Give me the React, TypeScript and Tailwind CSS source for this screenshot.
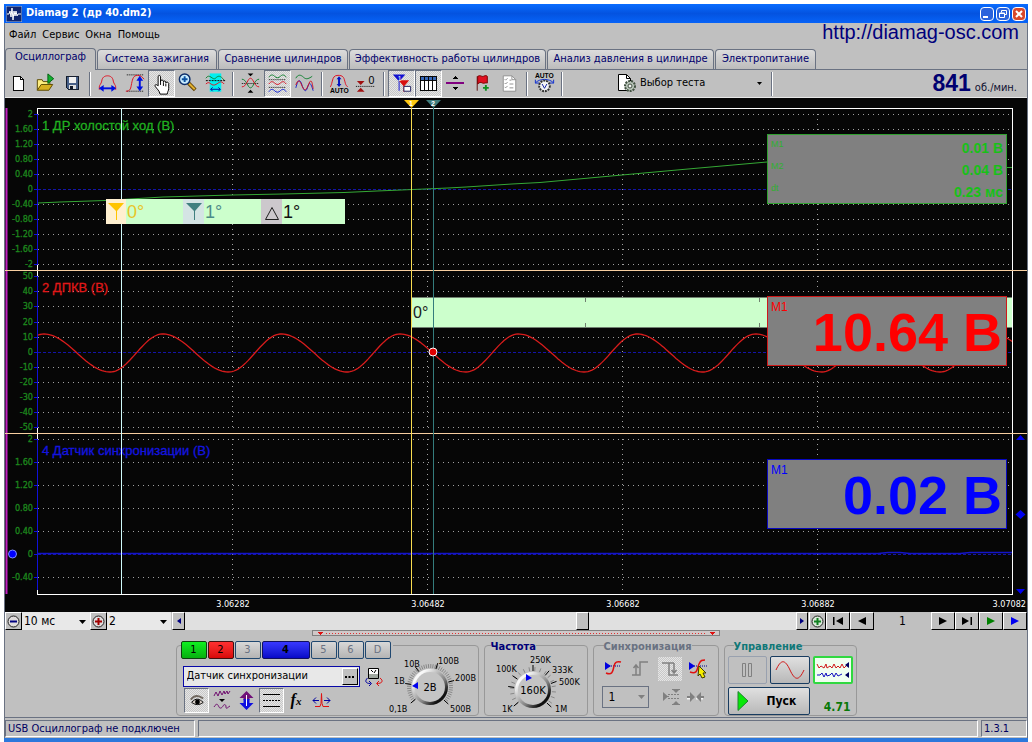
import type { ReactNode } from 'react'
import clsx from 'clsx'

const UI = "font-['DejaVu_Sans_Condensed','DejaVu_Sans',sans-serif]"
const ARIAL = "font-['Liberation_Sans',sans-serif]"

const PRESSED =
  'border-t-gray-500 border-l-gray-500 border-b-white border-r-white bg-[repeating-conic-gradient(#e6e6e6_0_25%,#c8c8c8_0_50%)] bg-[length:2px_2px]'
const RAISED = 'border border-t-white border-l-white border-b-black border-r-black bg-[#c0c0c0]'

/* ---------- small shared pieces ---------- */

function Icon({ children, crisp = false }: { children: ReactNode; crisp?: boolean }) {
  return (
    <svg viewBox="0 0 26 26" className="size-[26px]" fill="none" shapeRendering={crisp ? 'crispEdges' : 'auto'}>
      {children}
    </svg>
  )
}

function ToolButton({ label, pressed = false, children }: { label: string; pressed?: boolean; children: ReactNode }) {
  return (
    <button
      aria-label={label}
      aria-pressed={pressed}
      className={clsx('flex size-[27px] shrink-0 items-center justify-center border', pressed ? PRESSED : 'border-transparent')}
    >
      {children}
    </button>
  )
}

function Separator() {
  return <span className="mx-[3px] h-6 w-0.5 shrink-0 border-l border-l-gray-500 bg-white" />
}

/* ---------- title, menu, tabs ---------- */

function TitleBar() {
  return (
    <header className="flex h-[19px] items-center bg-linear-to-b from-[#0a6cff] via-[#0453e0] to-[#0763f8] pr-0.5 pl-0.5">
      <svg viewBox="0 0 16 16" className="size-4" fill="none">
        <rect width="16" height="16" fill="#10246c" stroke="#9cc0f0" />
        <path d="M1 8h2l1-3 1 6 1-9 1 12 1-9 1 5 1-5 1 5 1-2h3" stroke="#fff" />
      </svg>
      <h1 className={clsx(UI, 'ml-1 text-[11px] font-bold text-white')}>Diamag 2 (др 40.dm2)</h1>
      <div className="ml-auto flex gap-0.5">
        <button aria-label="Свернуть" className="size-[14px] rounded-sm border border-white bg-[#2a62dc]">
          <svg viewBox="0 0 12 12" className="size-3" stroke="#fff" strokeWidth="2">
            <path d="M2 9h5" />
          </svg>
        </button>
        <button aria-label="Восстановить" className="size-[14px] rounded-sm border border-white bg-[#2a62dc]">
          <svg viewBox="0 0 12 12" className="size-3" stroke="#fff" fill="none">
            <path d="M4.500 4.500v-2h5v4h-2M2.500 5h5v4.500h-5zM2.500 5.500h5" />
          </svg>
        </button>
        <button aria-label="Закрыть" className="size-[14px] rounded-sm border border-white bg-[#d8472a]">
          <svg viewBox="0 0 12 12" className="size-3" stroke="#fff" strokeWidth="2">
            <path d="M3 3l6 6M9 3l-6 6" />
          </svg>
        </button>
      </div>
    </header>
  )
}

function MenuBar() {
  return (
    <nav className="flex h-[25px] items-center justify-between pr-2 pl-1">
      <div className={clsx(UI, 'flex gap-1.5 text-[11px] text-black')}>
        <button>Файл</button>
        <button>Сервис</button>
        <button>Окна</button>
        <button>Помощь</button>
      </div>
      <a href="http://diamag-osc.com" className={clsx(ARIAL, 'pb-2 text-xl leading-4 text-[#00007c]')}>
        http://diamag-osc.com
      </a>
    </nav>
  )
}

const TABS = [
  { title: 'Осциллограф', width: 'w-[91px]' },
  { title: 'Система зажигания', width: 'w-[120px]' },
  { title: 'Сравнение цилиндров', width: 'w-[130px]' },
  { title: 'Эффективность работы цилиндров', width: 'w-[197px]' },
  { title: 'Анализ давления в цилиндре', width: 'w-[167px]' },
  { title: 'Электропитание', width: 'w-[101px]' },
]

function Tabs() {
  return (
    <div role="tablist" className={clsx(UI, 'flex h-[22px] items-end gap-px border-b border-gray-500 text-[11px] text-[#00006c]')}>
      {TABS.map((tab, i) => (
        <button
          key={tab.title}
          role="tab"
          aria-selected={i === 0}
          className={clsx(
            'shrink-0 rounded-t-sm border border-b-0 border-gray-500 whitespace-nowrap',
            tab.width,
            i === 0 ? '-mb-px h-[22px] bg-[#c0c0c0] pb-1' : 'h-5 bg-linear-to-b from-[#dcdcdc] to-[#bcbcbc]',
          )}
        >
          {tab.title}
        </button>
      ))}
    </div>
  )
}

/* ---------- toolbar ---------- */

function Toolbar() {
  return (
    <div className="flex h-[27px] items-center">
      <ToolButton label="Новый">
        <Icon crisp>
          <path d="M7.500 5.500h8l3 3v11h-11z" fill="#fff" stroke="#000" />
          <path d="M15.500 5.500v3h3" stroke="#000" />
        </Icon>
      </ToolButton>
      <ToolButton label="Открыть">
        <Icon>
          <path d="M4.500 19.500v-11h5l1 2h7v3" fill="#ffee80" stroke="#5c4a00" />
          <path d="M4.500 19.500l4-6h12l-4 6z" fill="#d8b020" stroke="#5c4a00" />
          <path d="M15.500 2.500l6 5-6 5z" fill="#10b030" stroke="#006010" />
        </Icon>
      </ToolButton>
      <ToolButton label="Сохранить">
        <Icon crisp>
          <path d="M6.500 5.500h13v13h-11l-2-2z" fill="#486088" stroke="#101828" />
          <path d="M9 6h8v6h-8z" fill="#f0f0f0" />
          <path d="M9 14h8v4h-8z" fill="#e0e0e0" />
          <path d="M10 15h3v3h-3z" fill="#101828" />
        </Icon>
      </ToolButton>
      <Separator />
      <ToolButton label="Период">
        <Icon>
          <path d="M4.500 19v-3c0-2 2-3 2.500-6 .5-4 3-5.500 6-5.500s5.500 1.500 6 5.500c.5 3 2.500 4 2.500 6v3" stroke="#e01020" />
          <path d="M6 17.500h14" stroke="#0010e0" strokeWidth="2" />
          <path d="M9 14v7l-5-3.500zM17 14v7l5-3.500z" fill="#0010e0" />
        </Icon>
      </ToolButton>
      <ToolButton label="Размах">
        <Icon>
          <path d="M5 3.500h18M5 20.500h18" stroke="#000" strokeDasharray="1 1" />
          <path d="M4 20.500c5 0 5-3 6-8s2-8.500 6-8.500 5 2 7 4" stroke="#e01020" />
          <path d="M18.500 8v9" stroke="#0010e0" strokeWidth="2" />
          <path d="M15 9.500h7l-3.500-5zM15 15.500h7l-3.500 5z" fill="#0010e0" />
        </Icon>
      </ToolButton>
      <ToolButton label="Рука" pressed>
        <Icon>
          <path
            d="M9.500 15V5.500c0-2 2.500-2 2.500 0V11v-1c0-1.500 3-1.500 3 0v1.500-.5c0-1.500 2.500-1.500 2.500 0v1c0-1.500 3-1 3 .5V18c0 2-1.500 3-1.500 5.500h-7.500C11 20 8 18 6.500 15.500c-1-1.500 1-3 3-.5z"
            fill="#fff"
            stroke="#000"
          />
          <path d="M12 11v3M15 12v3M17.500 12.500v3" stroke="#000" />
        </Icon>
      </ToolButton>
      <ToolButton label="Масштаб">
        <Icon>
          <path d="M13 12l7 7" stroke="#604000" strokeWidth="4" />
          <path d="M13.500 12.500l6 6" stroke="#e0b030" strokeWidth="2" />
          <circle cx="9" cy="8" r="5.500" fill="#c8ecff" stroke="#0c2c68" strokeWidth="1.500" />
          <path d="M9 5v6M6 8h6" stroke="#0c50a0" strokeWidth="2" />
        </Icon>
      </ToolButton>
      <ToolButton label="Участок">
        <Icon>
          <path d="M7 2h12v19h-12z" fill="#00f0f0" />
          <path d="M3 7c4-6 7 3 10 0s5-3 9 2" stroke="#108030" />
          <path d="M3 9.500h20" stroke="#000" strokeDasharray="2 1" />
          <path d="M3 13c4-4 5 2 9 1s6-6 10-1" stroke="#e01020" />
          <path d="M8 18.500h10M10 16.500l-2 2 2 2M16 16.500l2 2-2 2" stroke="#0010a0" />
        </Icon>
      </ToolButton>
      <Separator />
      <ToolButton label="Сместить к нулю">
        <Icon>
          <path d="M4 12.500h18" stroke="#000" strokeDasharray="1 1" />
          <path d="M4 8c5 0 6 9 9 9s4-9 9-9" stroke="#108030" />
          <path d="M4 16c5 0 6-9 9-9s4 9 9 9" stroke="#e01020" />
          <path d="M10 2h6l-3 3zM10 22h6l-3-3z" fill="#000" />
        </Icon>
      </ToolButton>
      <ToolButton label="Раздельно" pressed>
        <Icon>
          <path d="M4 6c2-3 4-3 6-1s4 2 6 0 4-2 6 1" stroke="#108030" />
          <path d="M4 8.500h18M4 16.500h18" stroke="#000" strokeDasharray="1 1" />
          <path d="M4 13c2-3 4-3 6-1s4 2 6 0 4-2 6 1" stroke="#d01020" />
          <path d="M4 21c2-3 4-3 6-1s4 2 6 0 4-2 6 1" stroke="#1020d0" />
        </Icon>
      </ToolButton>
      <ToolButton label="Вместе">
        <Icon>
          <path d="M4 7c2-4 5-4 8-1s6 1 9-1" stroke="#108030" />
          <path d="M4 17c2-8 4-10 6-4s4 10 6 4 3-7 6 3" stroke="#1020d0" />
          <path d="M4 14c2-6 4-5 6 0s4 8 7 0 4-3 5 4" stroke="#d01020" />
        </Icon>
      </ToolButton>
      <Separator />
      <ToolButton label="Авто масштаб">
        <Icon>
          <path d="M3.500 16c1-2 1-2 2-6s2-6 6-6c5 0 6 2 7 6s1 4 3 6" stroke="#e01020" />
          <path d="M12.500 7v7" stroke="#0010c0" strokeWidth="2" />
          <path d="M10 8h5l-2.500-3zM10 13h5l-2.500 3z" fill="#0010c0" />
          <text x="3" y="22" fontSize="7" fontWeight="bold" fill="#000" className={ARIAL}>
            AUTO
          </text>
        </Icon>
      </ToolButton>
      <ToolButton label="Нулевой уровень">
        <Icon>
          <path d="M2 15.500h19" stroke="#000" strokeDasharray="1 1" />
          <path d="M3 10h8l-4 4zM3 21h8l-4-4z" fill="#a01010" />
          <text x="15" y="13" fontSize="11" fill="#000" className={ARIAL}>
            0
          </text>
        </Icon>
      </ToolButton>
      <Separator />
      <ToolButton label="Маркеры" pressed>
        <Icon>
          <path d="M4 3h13l-6 7v10h-1v-10z" fill="#1010d0" />
          <path d="M10 9h11l-5 6v6h-1v-6z" fill="#d81010" />
          <text x="9" y="10" fontSize="7" fill="#fff" className={ARIAL}>
            1
          </text>
          <path d="M15.500 15.500h7v5h-7z" fill="#fff" stroke="#202060" />
        </Icon>
      </ToolButton>
      <ToolButton label="Таблица" pressed>
        <Icon crisp>
          <path d="M4.500 5.500h17v14h-17z" fill="#fff" stroke="#000" />
          <path d="M5 6h16v3h-16z" fill="#3868b8" />
          <path d="M4 9.500h17M8.500 6v13M13.500 6v13M17.500 6v13" stroke="#000" />
        </Icon>
      </ToolButton>
      <ToolButton label="Уровень">
        <Icon crisp>
          <path d="M3 12h19" stroke="#800080" strokeWidth="2" />
          <path d="M10 8h6l-3-3zM10 16h6l-3 3z" fill="#000" />
        </Icon>
      </ToolButton>
      <ToolButton label="Добавить метку">
        <Icon>
          <path d="M7.500 5v15" stroke="#601010" />
          <path d="M8 5c3-2 4 1 6 0s3-1 4 0v7c-2-1-3 1-5 0s-3-1-5 1z" fill="#e01020" stroke="#700" />
          <path d="M16.500 14v6M13.500 17h6" stroke="#109020" strokeWidth="2" />
        </Icon>
      </ToolButton>
      <ToolButton label="Отчёт">
        <Icon>
          <path d="M6.500 4.500h9l4 4v12h-13z" fill="#fff" stroke="#909090" />
          <path d="M15.500 4.500v4h4M8 8l1 1 2-2M8 12l1 1 2-2M8 16l1 1 2-2M13 9h2M13 13h4M13 17h4" stroke="#909090" />
        </Icon>
      </ToolButton>
      <Separator />
      <ToolButton label="Авто осциллограф">
        <Icon>
          <text x="3" y="7" fontSize="7" fontWeight="bold" fill="#000" className={ARIAL}>
            AUTO
          </text>
          <path d="M3.500 12c4-5 15-5 19 0M3.500 8.500v3.500h4M22.500 8.500v3.500h-4" stroke="#1030d0" />
          <circle cx="13" cy="15" r="5.500" fill="#f4f4f4" stroke="#303030" strokeWidth="2" strokeDasharray="2 1" />
          <path d="M10.500 13l2.500 4.500 2.500-4.500" stroke="#1020a0" />
        </Icon>
      </ToolButton>
      <Separator />
      <button className={clsx(UI, 'ml-12 flex h-[26px] items-center text-[11px] text-black')}>
        <Icon>
          <path d="M4.500 3.500h8l4 4v12h-12z" fill="#fff" stroke="#000" />
          <path d="M12.500 3.500v4h4" stroke="#000" />
          <circle cx="16" cy="15" r="5" fill="#b8c4b8" stroke="#405040" strokeWidth="2" strokeDasharray="2 1" />
          <circle cx="16" cy="15" r="2" fill="#f4f4f4" stroke="#405040" />
        </Icon>
        <span>Выбор теста</span>
        <svg viewBox="0 0 5 3" className="mr-1.5 ml-[52px] h-[3px] w-[5px]">
          <path d="M0 0h5l-2.500 3z" />
        </svg>
      </button>
      <Separator />
      <p className="mr-2.5 ml-auto flex items-baseline gap-1 text-[#000070]">
        <strong className={clsx(ARIAL, 'text-[23px] leading-6')}>841</strong>
        <span className={clsx(UI, 'text-[11px] text-[#101030]')}>об./мин.</span>
      </p>
    </div>
  )
}

/* ---------- oscilloscope screen ---------- */

const LANES = [
  {
    rows: [114, 129, 144, 159, 174, 189, 204, 219, 234, 249, 264],
    labels: ['2', '1.60', '1.20', '0.80', '0.40', '0', '-0.40', '-0.80', '-1.20', '-1.60', '-2'],
    zero: 189,
    end: 264,
  },
  {
    rows: [276, 291, 306, 322, 337, 352, 367, 382, 397, 412, 427],
    labels: ['50', '40', '30', '20', '10', '0', '-10', '-20', '-30', '-40', '-50'],
    zero: 352,
    end: 427,
  },
  {
    rows: [439, 462, 485, 508, 531, 554, 577],
    labels: ['2', '1.60', '1.20', '0.80', '0.40', '0', '-0.40'],
    zero: 554,
    end: 590,
  },
]

const TIMES = [
  { x: 232, text: '3.06282' },
  { x: 427, text: '3.06482' },
  { x: 622, text: '3.06682' },
  { x: 817, text: '3.06882' },
]

// The crank sensor falls slower than it rises, so each half period has its own length.
function crankWave() {
  const period = 118.6
  const fall = 66
  const pts: string[] = []
  for (let x = 38; x <= 1012; x += 2) {
    const p = (x - 44 + period) % period
    const phase = p < fall ? (Math.PI * p) / fall : Math.PI + (Math.PI * (p - fall)) / (period - fall)
    pts.push(`${x},${(353 - 19 * Math.cos(phase)).toFixed(1)}`)
  }
  return pts.join(' ')
}

function Screen() {
  return (
    <svg viewBox="5 98 1022 514" className="block h-auto w-full bg-[#060606]" fill="none">
      <path d="M6.500 108v486" stroke="#c020c0" strokeWidth="2" />
      <path d="M37.500 594.500v-486h975v486z" stroke="#fff" shapeRendering="crispEdges" />

      <g shapeRendering="crispEdges">
        {LANES.map((lane) => (
          <g key={lane.zero}>
            {lane.rows.map((y) =>
              y === lane.zero ? (
                <path key={y} d={`M38 ${y + 0.5}h974`} stroke="#1414a8" strokeDasharray="3 2" />
              ) : (
                <path key={y} d={`M38 ${y + 0.5}h974`} stroke="#a0a0a0" strokeDasharray="1 4" />
              ),
            )}
            <path d={`M37.500 ${lane.rows[0]}V${lane.end}`} stroke="#1010d8" />
            {lane.rows.map((y) => (
              <path key={y} d={`M34 ${y + 0.5}h4`} stroke="#1010d8" />
            ))}
            {TIMES.map((t) => (
              <path key={t.x} d={`M${t.x}.5 ${lane.rows[0]}V${lane.end + 4}`} stroke="#a0a0a0" strokeDasharray="1 4" />
            ))}
          </g>
        ))}
      </g>

      <g className={UI} fontSize="9" fill="#1d861d" stroke="#1d861d" strokeWidth="0.3" textAnchor="end">
        {LANES.map((lane) =>
          lane.rows.map((y, i) => (
            <text key={y} x="33" y={y + 3}>
              {lane.labels[i]}
            </text>
          )),
        )}
      </g>
      <g className={UI} fontSize="9" fill="#fff" textAnchor="middle">
        {TIMES.map((t) => (
          <text key={t.x} x={t.x + 1} y="607">
            {t.text}
          </text>
        ))}
        <text x="1026" y="607" textAnchor="end">
          3.07082
        </text>
      </g>

      <path
        d="M38 203L60 202 105 200.500 163 197 232 195 283 194 344 192.500 377 191 401 190 425 189 448 188 466 187 512 184 540 182.500 584 178.500 622 175 688 169 750 163.500 767 162M1007 167.500h5"
        stroke="#35a835"
      />
      <path d="M38 553.500h840l10-1h12l10 1h50l10-1h42" stroke="#1414c8" strokeWidth="1.500" />

      <path d="M5 270.500h1022M5 433.500h1022" stroke="#f8cfa0" shapeRendering="crispEdges" />

      <g className={ARIAL} fontSize="13">
        <text x="42" y="130" fill="#20b020" stroke="#20b020" strokeWidth="0.3">
          1 ДР холостой ход (В)
        </text>
        <text x="42" y="292" fill="#e01818" stroke="#e01818" strokeWidth="0.3">
          2 ДПКВ (В)
        </text>
        <text x="42" y="455" fill="#1414e0" stroke="#1414e0" strokeWidth="0.3">
          4 Датчик синхронизации (В)
        </text>
      </g>

      <path d="M121.500 108v486" stroke="#d0fafa" shapeRendering="crispEdges" />

      <rect x="411" y="297" width="601" height="31" fill="#ccffcc" />
      <path d="M411 297.500h601M411 327.500h601M585.500 297v5M585.500 323v4M759.500 297v5M759.500 323v4" stroke="#708070" />
      <text x="413" y="318" fontSize="16" fill="#202020" className={ARIAL}>
        0°
      </text>

      <polyline points={crankWave()} stroke="#d81c1c" strokeWidth="1.300" />

      <path d="M411.500 108v486" stroke="#f8dc50" shapeRendering="crispEdges" />
      <path d="M433.500 108v486" stroke="#347c7c" shapeRendering="crispEdges" />
      <path d="M404 100h15l-7.500 8z" fill="#ffc810" />
      <path d="M426 100h15l-7.500 8z" fill="#407c7c" />
      <g fontSize="7" fontWeight="bold" fill="#fff" className={ARIAL}>
        <text x="409" y="106">
          1
        </text>
        <text x="431" y="106">
          2
        </text>
      </g>
      <circle cx="433" cy="352" r="4" fill="#e00000" stroke="#fff" />
      <circle cx="12.500" cy="554" r="4" fill="#0000ff" stroke="#8090ff" />

      <rect x="106" y="199" width="239" height="25" fill="#ccffcc" />
      <path d="M106 199h20v25h-20z" fill="#fff0d0" />
      <path d="M183 199h21v25h-21z" fill="#d4e4e4" />
      <path d="M261 199h21v25h-21z" fill="#ccc8cc" />
      <path d="M108 203h16l-7 8v9h-1v-9z" fill="#ffc400" />
      <path d="M186 203h16l-7 8v9h-1v-9z" fill="#408080" />
      <path d="M265.500 219.500h13l-6.500-12z" stroke="#202020" />
      <g fontSize="18" className={ARIAL}>
        <text x="127" y="218" fill="#e8c428">
          0°
        </text>
        <text x="205" y="218" fill="#4c8c88">
          1°
        </text>
        <text x="283" y="218" fill="#101010">
          1°
        </text>
      </g>

      <path d="M1016 440h9l-4.500-5zM1020.500 510l5 4.500-5 4.500-5-4.500zM1016 589h9l-4.500 5z" fill="#0000f0" />
    </svg>
  )
}

function Readout({ marker, value, tone, place }: { marker: string; value: string; tone: string; place: string }) {
  return (
    <div className={clsx(ARIAL, 'absolute right-5 h-[70px] w-60 border bg-[#808080] px-1', tone, place)}>
      <span className="absolute top-0.5 left-[3px] text-xs">{marker}</span>
      <p className="text-right text-[54px] leading-[71px] font-bold">{value}</p>
    </div>
  )
}

function Scope() {
  return (
    <main className="relative border-t border-[#e8e8e8]">
      <Screen />
      <dl
        className={clsx(
          ARIAL,
          'absolute top-9 right-5 h-[70px] w-60 border border-[#30a030] bg-[#808080] px-[3px] pt-[3px] text-[#18c018]',
        )}
      >
        {[
          ['M1', '0.01 В'],
          ['M2', '0.04 В'],
          ['dt', '0.23 мс'],
        ].map(([name, value]) => (
          <div key={name} className="flex h-[22px] justify-between">
            <dt className="text-[9px] leading-3 text-[#30b030]">{name}</dt>
            <dd className="text-sm leading-5 font-bold">{value}</dd>
          </div>
        ))}
      </dl>
      <Readout marker="M1" value="10.64 В" tone="border-[#d01818] text-[#ff0000]" place="top-[198px]" />
      <Readout marker="M1" value="0.02 В" tone="border-[#0808c0] text-[#0000ff]" place="top-[361px]" />
    </main>
  )
}

/* ---------- scroll and playback row ---------- */

function ZoomSelect({ label, value, sign, width }: { label: string; value: string; sign: string; width: string }) {
  return (
    <div className="flex">
      <button aria-label={label} className={clsx(RAISED, 'flex w-[17px] items-center justify-center')}>
        <svg viewBox="0 0 13 13" className="size-[13px]" fill="none">
          <circle cx="6.500" cy="6.500" r="5.500" fill="#e0dcdc" stroke="#202020" />
          <path d={sign} stroke={label === 'Сжать' ? '#000080' : '#a00000'} strokeWidth="2" />
        </svg>
      </button>
      <label className="relative flex">
        <select aria-label={label} className={clsx(UI, 'appearance-none bg-[#e8e8e8] pl-0.5 text-xs leading-4 text-black', width)}>
          <option>{value}</option>
        </select>
        <svg viewBox="0 0 7 4" className="pointer-events-none absolute top-2 right-1 h-1 w-[7px]">
          <path d="M0 0h7l-3.500 4z" />
        </svg>
      </label>
    </div>
  )
}

function PlayButton({ label, d, color = '#000' }: { label: string; d: string; color?: string }) {
  return (
    <button aria-label={label} className={clsx(RAISED, 'flex w-6 shrink-0 items-center justify-center')}>
      <svg viewBox="0 0 12 8" className="h-2 w-3" fill={color}>
        <path d={d} />
      </svg>
    </button>
  )
}

function ScrollRow() {
  return (
    <div className="flex h-[18px]">
      <ZoomSelect label="Сжать" value="10 мс" sign="M3 6.500h7" width="w-[68px]" />
      <ZoomSelect label="Растянуть" value="2" sign="M3 6.500h7M6.500 3v7" width="w-[64px]" />
      <button aria-label="Влево" className={clsx(RAISED, 'ml-px flex w-[13px] items-center justify-center')}>
        <svg viewBox="0 0 4 6" className="h-1.5 w-1" fill="#000080">
          <path d="M4 0v6l-4-3z" />
        </svg>
      </button>
      <div className="flex flex-1 bg-[#e0e0e0]">
        <span className="w-[64%]" />
        <span className={clsx(RAISED, 'w-[13px]')} />
      </div>
      <button aria-label="Вправо" className={clsx(RAISED, 'flex w-3 items-center justify-center')}>
        <svg viewBox="0 0 4 6" className="h-1.5 w-1" fill="#000080">
          <path d="M0 0v6l4-3z" />
        </svg>
      </button>
      <button aria-label="Добавить" className={clsx(RAISED, 'ml-px flex w-[17px] items-center justify-center')}>
        <svg viewBox="0 0 13 13" className="size-[13px]" fill="none">
          <circle cx="6.500" cy="6.500" r="5.500" fill="#d8e8d8" stroke="#202020" />
          <path d="M3 6.500h7M6.500 3v7" stroke="#108020" strokeWidth="2" />
        </svg>
      </button>
      <PlayButton label="В начало" d="M1 0h1.500v8h-1.500zM11 0v8l-7-4z" />
      <PlayButton label="Назад" d="M10 0v8l-8-4z" />
      <output className={clsx(UI, 'w-[57px] text-center text-xs leading-[19px]')}>1</output>
      <PlayButton label="Вперёд" d="M2 0v8l8-4z" />
      <PlayButton label="В конец" d="M1 0v8l7-4zM9.500 0h1.500v8h-1.500z" />
      <PlayButton label="Воспроизвести" d="M2 0v8l8-4z" color="#008000" />
      <PlayButton label="Запись" d="M2 0v8l8-4z" color="#0000f0" />
    </div>
  )
}

/* ---------- control panel ---------- */

const CHANNELS = [
  { name: '1', look: 'w-[26px] border-[#104010] bg-linear-to-b from-[#10f020] to-[#08b010] text-black' },
  { name: '2', look: 'w-[26px] border-[#401010] bg-linear-to-b from-[#ff3030] to-[#d80808] text-black' },
  { name: '3', look: 'w-[26px] border-[#204870] bg-linear-to-b from-[#d8d8d8] to-[#b4b4b4] text-gray-500' },
  { name: '4', look: 'w-12 border-[#101060] bg-linear-to-b from-[#3838ff] to-[#0808c8] font-bold text-black' },
  { name: '5', look: 'w-[26px] border-[#204870] bg-linear-to-b from-[#d8d8d8] to-[#b4b4b4] text-gray-500' },
  { name: '6', look: 'w-[26px] border-[#204870] bg-linear-to-b from-[#d8d8d8] to-[#b4b4b4] text-gray-500' },
  { name: 'D', look: 'w-[26px] border-[#204870] bg-linear-to-b from-[#d8d8d8] to-[#b4b4b4] text-gray-500' },
]

type KnobLabel = { x: number; y: number; text: string }

function Knob({
  value,
  labels,
  marks,
  step,
  pointer,
}: {
  value: string
  labels: KnobLabel[]
  marks: number[]
  step: number
  pointer: string
}) {
  const ring: number[] = []
  for (let a = 140; a <= 400; a += step) ring.push(a)
  const tick = (a: number, r1: number, r2: number) => {
    const c = Math.cos((a * Math.PI) / 180)
    const s = Math.sin((a * Math.PI) / 180)
    return `M${(48 + c * r1).toFixed(1)} ${(38 + s * r1).toFixed(1)}L${(48 + c * r2).toFixed(1)} ${(38 + s * r2).toFixed(1)}`
  }
  const id = `knob-${step}`
  return (
    <svg viewBox="0 0 98 66" className="h-[66px] w-[98px] shrink-0" fill="none">
      <defs>
        <linearGradient id={id} x1="0" y1="0" x2="1" y2="1">
          <stop offset="0.200" stopColor="#f8f8f8" />
          <stop offset="0.600" stopColor="#808080" />
          <stop offset="0.800" stopColor="#101010" />
        </linearGradient>
      </defs>
      <path d={ring.map((a) => tick(a, 19, 23)).join('')} stroke="#888" />
      <path d={marks.map((a) => tick(a, 19, 25)).join('')} stroke="#000" />
      <circle cx="48" cy="38" r="18" fill={`url(#${id})`} />
      <circle cx="48" cy="38" r="15" fill="#c4c4c4" />
      <path d={pointer} fill="#0000f0" />
      <text x="48" y="42" fontSize="11" textAnchor="middle" fill="#000" className={UI}>
        {value}
      </text>
      <g className={UI} fontSize="9" fill="#000">
        {labels.map((l) => (
          <text key={l.text} x={l.x} y={l.y}>
            {l.text}
          </text>
        ))}
      </g>
    </svg>
  )
}

function Group({ title, tone, className, children }: { title: string; tone: string; className: string; children: ReactNode }) {
  return (
    <fieldset className={clsx('h-[78px] rounded-sm border border-[#989898]', className)}>
      <legend className={clsx(UI, 'ml-1.5 h-[14px] text-[11px] leading-[18px] font-bold', tone)}>{title}</legend>
      {children}
    </fieldset>
  )
}

function ChannelGroup() {
  return (
    <section className="relative mt-[3px] flex h-[75px] w-[303px]">
      <span className="absolute inset-x-0 top-1 bottom-0 rounded-sm border border-[#989898]" />
      <div className="relative pl-[5px]">
        <div className={clsx(UI, 'flex w-[212px] gap-px bg-[#c0c0c0] text-[11px]')}>
          {CHANNELS.map((c) => (
            <button key={c.name} className={clsx('h-[18px] rounded-xs border leading-4', c.look)}>
              {c.name}
            </button>
          ))}
        </div>
        <div className="mt-[7px] ml-0.5 flex items-center gap-1">
          <div className="flex h-[21px] w-[177px] border border-[#0808a8] bg-[#e8e8e8] p-px">
            <input
              aria-label="Датчик"
              defaultValue="Датчик синхронизации"
              className={clsx(UI, 'min-w-0 flex-1 bg-transparent pl-0.5 text-[11px] text-black outline-none')}
            />
            <button aria-label="Выбрать датчик" className={clsx(RAISED, 'flex w-4 items-center justify-center')}>
              <svg viewBox="0 0 9 2" className="h-0.5 w-[9px]">
                <path d="M0 0h2v2h-2zM3.500 0h2v2h-2zM7 0h2v2h-2z" />
              </svg>
            </button>
          </div>
          <button aria-label="Обновить">
            <svg viewBox="0 0 20 20" className="size-5" fill="none">
              <path d="M4.500 1.500h10v10h-10z" fill="#fff" stroke="#000" />
              <path d="M5 7h9v4h-9z" fill="#a0a8a0" />
              <path d="M7 3l2 2M12 3l-2 3" stroke="#000" />
              <path d="M3.500 11c-3 3-2 5.500 3 5.500M5 14l2.500 2.500-2.500 2.500" stroke="#0000a0" />
              <path d="M16 11c4 3 2 5.500-3 5.500M15 14l-2.500 2.500 2.500 2.500" stroke="#e01010" />
            </svg>
          </button>
        </div>
        <div className="mt-px ml-[3px] flex">
          <button aria-label="Показать канал" className={clsx('size-[25px] border', PRESSED)}>
            <svg viewBox="0 0 24 24" className="size-[23px]" fill="none">
              <path d="M6 11c4-5 9-4 13-1" stroke="#706860" strokeWidth="2" />
              <path d="M7 14c4-5 8-4 12 0-4 3-8 3-12 0z" fill="#d8d0c8" stroke="#000" />
              <circle cx="13" cy="13.500" r="2.500" fill="#000" />
            </svg>
          </button>
          <button aria-label="Сгладить" className="size-[25px]">
            <svg viewBox="0 0 25 25" className="size-[25px]" fill="none" stroke="#701070">
              <path d="M5 8l2-4 2 4 2-5 2 4 2-4 1 3 2-3 1 3 2-3" />
              <path d="M10 11h6l-3 3z" fill="#000" stroke="none" />
              <path d="M5 19c3-5 4-2 5 0s3 1 4-1 3-2 3 1 2 0 4-1" />
            </svg>
          </button>
          <button aria-label="Инвертировать" className="size-[25px]">
            <svg viewBox="0 0 25 25" className="size-[25px]">
              <path d="M12.500 3l7 7h-4v2h-6v-2h-4z" fill="#701078" />
              <path d="M12.500 22l7-7h-4v-4h-6v4h-4z" fill="#1010e0" />
              <path d="M12 7h1v11h-1z" fill="#fff" />
            </svg>
          </button>
          <button aria-label="Нулевая линия" className={clsx('size-[25px] border', PRESSED)}>
            <svg viewBox="0 0 23 23" className="size-[23px]" stroke="#000">
              <path d="M3 5.500h17M3 17.500h17" />
              <path d="M3 11.500h17" strokeDasharray="2 1" />
            </svg>
          </button>
          <button aria-label="Функция" className="size-[25px] font-['Liberation_Serif',serif] text-base leading-6 font-bold text-black italic">
            f<span className="text-[11px]">x</span>
          </button>
          <button aria-label="Сдвиг" className="size-[25px]">
            <svg viewBox="0 0 25 25" className="size-[25px]" fill="none">
              <path d="M6 18.500h5l1-3 .5-10 .5 10 1 3h6" stroke="#e01010" />
              <path d="M4 12.500h6M7 9.500l-3 3 3 3M15 12.500h6M18 9.500l3 3-3 3" stroke="#0000a0" />
            </svg>
          </button>
        </div>
      </div>
      <div className="relative -ml-[11px] pt-2">
        <Knob
          value="2В"
          step={6}
          marks={[140, 188, 234, 288, 345, 403]}
          pointer="M30 37l6-4v7z"
          labels={[
            { x: 22, y: 18, text: '10В' },
            { x: 56, y: 15, text: '100В' },
            { x: 12, y: 35, text: '1В' },
            { x: 73, y: 32, text: '200В' },
            { x: 7, y: 63, text: '0,1В' },
            { x: 68, y: 63, text: '500В' },
          ]}
        />
      </div>
    </section>
  )
}

const SYNC_ICON = 'size-6'

function SyncGroup() {
  return (
    <Group title="Синхронизация" tone="text-gray-500" className="w-[126px] px-1">
      <div className="flex justify-between px-[3px] pt-[5px]">
        <button aria-label="Уровень синхронизации">
          <svg viewBox="0 0 24 24" className={SYNC_ICON} fill="none">
            <path d="M4 9h16" stroke="#000090" strokeDasharray="1 1" />
            <path d="M5 16c7 3 7-3 8-7s3-5 7-4" stroke="#e01010" strokeWidth="1.500" />
            <path d="M4 5v8l6-4z" fill="#0000e0" />
          </svg>
        </button>
        <button aria-label="По фронту">
          <svg viewBox="0 0 24 24" className={SYNC_ICON} fill="none" stroke="#808080" strokeWidth="1.500">
            <path d="M3 18h8V5h8M7 18V9M4.500 11l2.500-3 2.500 3" />
          </svg>
        </button>
        <button aria-label="По спаду" className="bg-[repeating-conic-gradient(#e6e6e6_0_25%,#c8c8c8_0_50%)] bg-[length:2px_2px]">
          <svg viewBox="0 0 24 24" className={SYNC_ICON} fill="none" stroke="#808080" strokeWidth="1.500">
            <path d="M4 6h7v12h9M16 6v9M13.500 13l2.500 3 2.500-3M11 6h5" />
          </svg>
        </button>
        <button aria-label="Выбрать уровень">
          <svg viewBox="0 0 24 24" className={SYNC_ICON} fill="none">
            <path d="M4 9h18" stroke="#000090" strokeDasharray="1 1" />
            <path d="M4 15c8 3 7-4 9-8s3-4 6-4" stroke="#e01010" strokeWidth="1.500" />
            <path d="M3 5v8l6-4z" fill="#0000e0" />
            <path d="M13 9l7 7h-3l2 4-3 1-2-4-2 2z" fill="#f8f000" stroke="#403c00" />
          </svg>
        </button>
      </div>
      <div className="flex items-center pt-1 pl-1">
        <label className="relative mr-2.5 flex">
          <select
            aria-label="Канал синхронизации"
            className={clsx(UI, 'h-[22px] w-[47px] appearance-none border border-gray-500 pl-1.5 text-xs text-black')}
          >
            <option>1</option>
          </select>
          <svg viewBox="0 0 7 4" className="pointer-events-none absolute top-[9px] right-1 h-1 w-[7px]" fill="#808080">
            <path d="M0 0h7l-3.500 4z" />
          </svg>
        </label>
        <button aria-label="Окно синхронизации">
          <svg viewBox="0 0 24 24" className={SYNC_ICON} fill="none">
            <path d="M9 9.500h12M9 13.500h12M5 11.500h5" stroke="#808080" strokeDasharray="2 1" />
            <path d="M4 7v9l5-4.500zM13 4h8l-4 4zM13 20h8l-4-4z" fill="#808080" />
            <path d="M13 4.500h8M13 19.500h8" stroke="#808080" />
          </svg>
        </button>
        <button aria-label="К центру">
          <svg viewBox="0 0 24 24" className={SYNC_ICON} fill="none">
            <path d="M4 13h6M13 13h7" stroke="#f4f4f4" strokeWidth="3" />
            <path d="M4 12h6M14 12h7" stroke="#808080" strokeWidth="2" />
            <path d="M7 7l5 5-5 5zM18 7l-5 5 5 5z" fill="#808080" />
          </svg>
        </button>
      </div>
    </Group>
  )
}

const PUSH = 'rounded-xs border-[#183c60] bg-linear-to-b from-[#e0e0e0] to-[#b8b8b8]'

function ControlGroup() {
  return (
    <Group title="Управление" tone="text-[#107878]" className="w-[133px] px-[3px]">
      <div className="grid grid-cols-3 gap-[3px] pt-1">
        <button aria-label="Пауза" className="flex h-7 items-center justify-center rounded-xs border border-gray-400">
          <svg viewBox="0 0 12 16" className="h-4 w-3" fill="none" stroke="#808080">
            <path d="M1.500 1.500h3v13h-3zM7.500 1.500h3v13h-3z" />
          </svg>
        </button>
        <button aria-label="Однократно" className={clsx(PUSH, 'flex h-7 items-center justify-center border')}>
          <svg viewBox="0 0 30 20" className="h-5 w-[30px]" fill="none">
            <path d="M1 10c5-11 9-11 14 0s9 11 14 0" stroke="#d01818" />
          </svg>
        </button>
        <button aria-label="Непрерывно" className="flex h-7 items-center justify-center rounded-xs border-2 border-[#30d840] bg-[#f0fff0]">
          <svg viewBox="0 0 34 20" className="h-5 w-[34px]" fill="none">
            <path d="M1 4l2 4 2-2 3 2 2-4 1 4 3-2 2 2 2-4 2 4 2-2 2 2 2-4 2 4 2-2" stroke="#d01818" />
            <path d="M1 15h3l2-2 2 4 2-4 1 3 3-1 2-2 2 4 2-4 2 3 2-1 2-1" stroke="#1010c0" />
            <path d="M33 2v6l-4-3zM33 12v6l-4-3z" fill="#000060" />
          </svg>
        </button>
        <button className={clsx(PUSH, UI, 'col-span-2 flex h-7 items-center border pl-2 text-xs font-bold text-black')}>
          <svg viewBox="0 0 12 20" className="mr-[18px] h-5 w-3">
            <path d="M1 0.500v19l10-9.500z" fill="#08e808" stroke="#208030" />
          </svg>
          Пуск
        </button>
        <output className={clsx(UI, 'self-end pr-0.5 text-right text-xs leading-[15px] font-bold text-[#087808]')}>4.71</output>
      </div>
    </Group>
  )
}

function ControlPanel() {
  return (
    <div className="border-b border-gray-500 pb-px">
      <svg viewBox="0 0 408 6" className="mx-auto block h-1.5 w-[408px]" fill="none" shapeRendering="crispEdges">
        <path d="M0.500 0.500h407v5h-407z" fill="#d0c8c8" stroke="#808080" />
        <path d="M14 3.500h380" stroke="#e03030" strokeDasharray="1 2" />
        <path d="M5 2h6l-3 3zM397 2h6l-3 3z" fill="#e01010" />
      </svg>
      <div className="flex justify-center gap-[5px] pt-0.5">
        <ChannelGroup />
        <Group title="Частота" tone="text-[#000078]" className="w-[104px]">
          <Knob
            value="160K"
            step={15}
            marks={[140, 188, 215, 270, 310, 340, 403]}
            pointer="M41 22l6 4-6 3z"
            labels={[
              { x: 11, y: 20, text: '100K' },
              { x: 45, y: 11, text: '250K' },
              { x: 67, y: 21, text: '333K' },
              { x: 74, y: 33, text: '500K' },
              { x: 70, y: 60, text: '1M' },
              { x: 17, y: 60, text: '1K' },
            ]}
          />
        </Group>
        <SyncGroup />
        <ControlGroup />
      </div>
    </div>
  )
}

function StatusBar() {
  const cell = 'h-[17px] border border-t-gray-500 border-l-gray-500 border-b-white border-r-white px-0.5 leading-[15px]'
  return (
    <footer className={clsx(UI, 'flex gap-[3px] pt-0.5 pb-px text-[11px] text-[#000060]')}>
      <p className={clsx(cell, 'w-[190px]')}>USB Осциллограф не подключен</p>
      <p className={clsx(cell, 'flex-1')} />
      <p className={clsx(cell, 'w-[46px]')}>1.3.1</p>
    </footer>
  )
}

export default function App() {
  return (
    <div className="bg-white px-1 pt-1">
      <div className="bg-[#c0c0c0]">
        <TitleBar />
        <div className="border-x border-gray-500">
          <MenuBar />
          <Tabs />
          <Toolbar />
          <Scope />
          <ScrollRow />
          <ControlPanel />
          <StatusBar />
        </div>
        <div className="h-1 bg-[#2c78dc]" />
      </div>
    </div>
  )
}
